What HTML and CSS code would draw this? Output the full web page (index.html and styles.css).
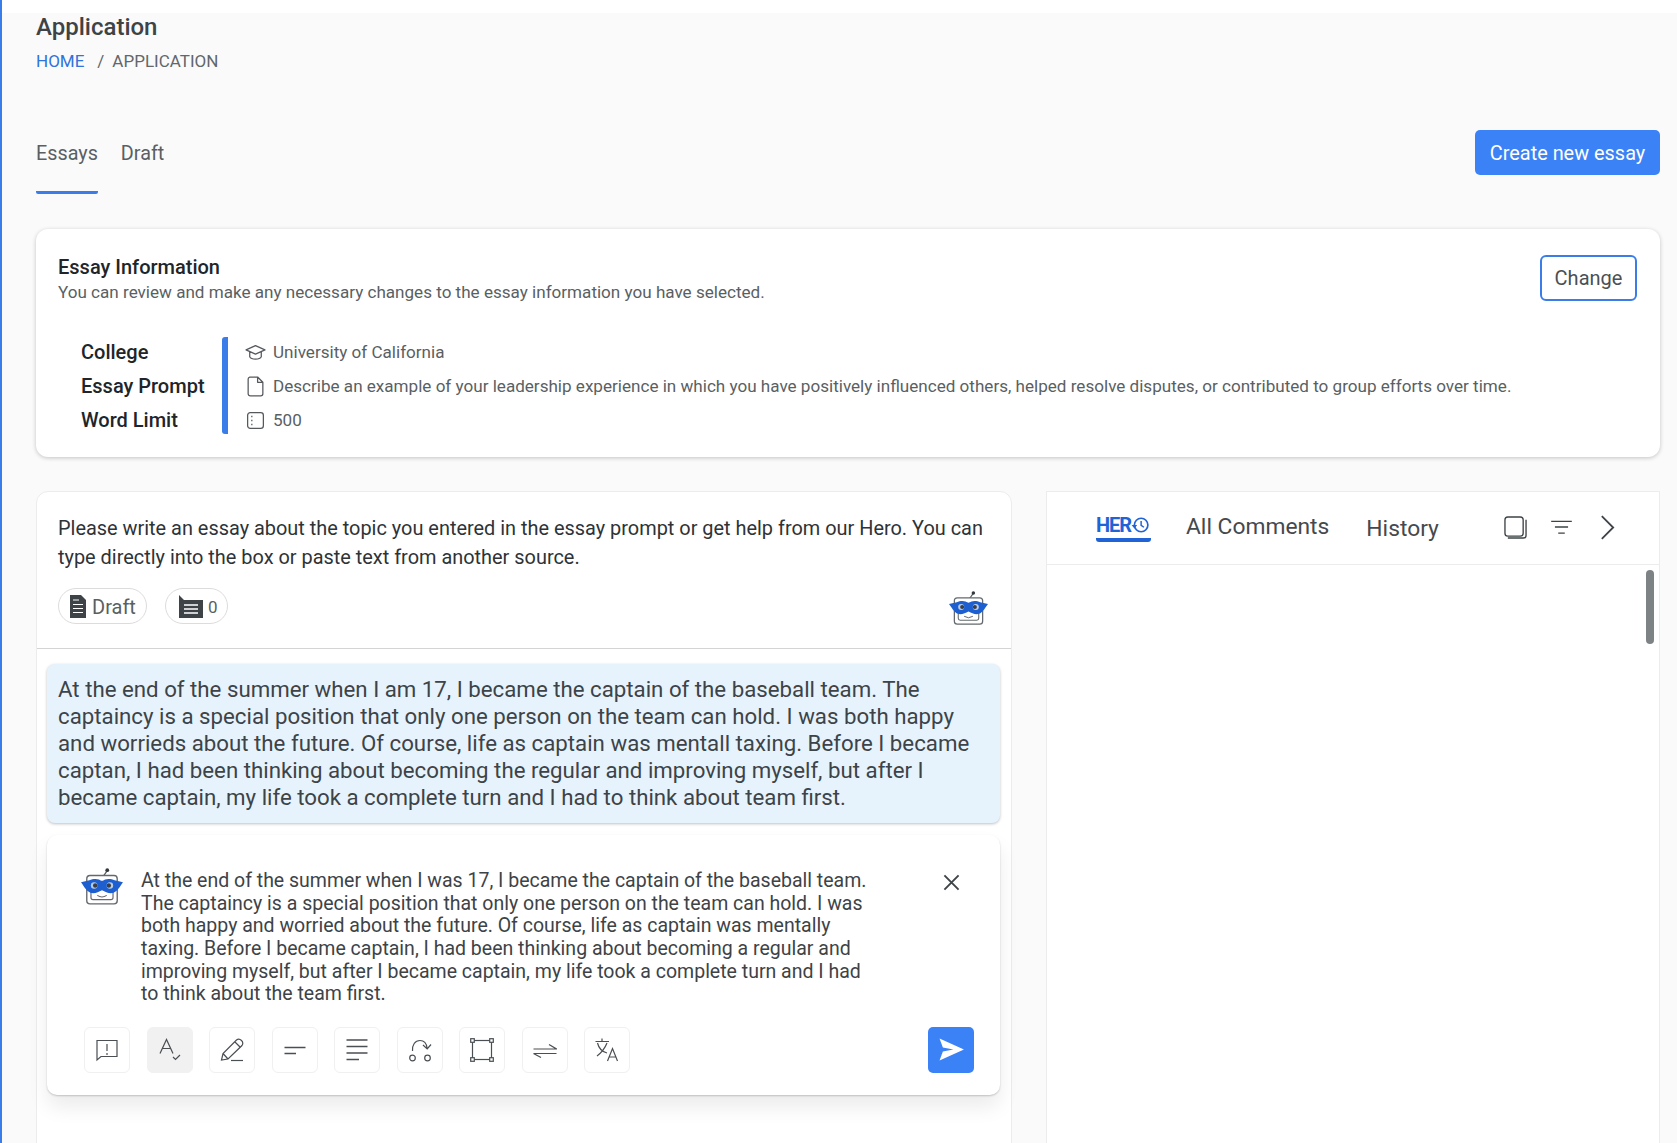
FILE: index.html
```html
<!DOCTYPE html>
<html lang="en">
<head>
<meta charset="utf-8">
<title>Application</title>
<link rel="stylesheet" href="styles.css">
</head>
<body>
<svg class="defs" width="0" height="0" aria-hidden="true">
  <symbol id="robot" viewBox="0 0 40 35">
    <path d="M21 8 L24.500 3" fill="none" stroke="#555b60" stroke-width="1.200"/>
    <circle cx="25" cy="2" r="1.800" fill="#33383c"/>
    <rect x="5.500" y="7" width="29" height="27" rx="3" fill="#fff" stroke="#63696e" stroke-width="1.300"/>
    <path d="M9.500 20 V28 a2 2 0 0 0 2 2 H28.500 a2 2 0 0 0 2 -2 V20" fill="none" stroke="#63696e" stroke-width="1.100"/>
    <path d="M15.500 26 q4.500 3 9 0" fill="none" stroke="#63696e" stroke-width="1"/>
    <path d="M0 13.500 L8 11.500 C11 10 15 10 17 10.800 C18.500 11.500 19 12 20 12 C21 12 21.500 11.500 23 10.800 C25 10 29 10 32 11.500 L40 13.500 C37.500 16.500 35.500 21.500 31 23.500 C27 25 23.500 22.500 20 21 C16.500 22.500 13 25 9 23.500 C4.500 21.500 2.500 16.500 0 13.500 Z" fill="#1d5fd1"/>
    <circle cx="12.500" cy="16.500" r="3.100" fill="#b9cce8"/>
    <circle cx="27.500" cy="16.500" r="3.100" fill="#b9cce8"/>
    <circle cx="13.500" cy="16.500" r="2.100" fill="#3a3f44"/>
    <circle cx="26.500" cy="16.500" r="2.100" fill="#3a3f44"/>
  </symbol>
</svg>

<main class="page">
  <header class="page-head">
    <h1 class="page-title">Application</h1>
    <nav class="crumbs"><a class="crumb-link">HOME</a><span class="crumb-sep">/</span><span>APPLICATION</span></nav>
  </header>

  <div class="tabbar">
    <div class="tabs">
      <span class="tab tab-active">Essays</span>
      <span class="tab">Draft</span>
    </div>
    <button class="btn-primary">Create new essay</button>
  </div>

  <section class="info-card">
    <div class="info-head">
      <div>
        <h2 class="info-title">Essay Information</h2>
        <p class="info-sub">You can review and make any necessary changes to the essay information you have selected.</p>
      </div>
      <button class="btn-outline">Change</button>
    </div>
    <div class="info-body">
      <div class="info-labels">
        <div class="info-label">College</div>
        <div class="info-label">Essay Prompt</div>
        <div class="info-label">Word Limit</div>
      </div>
      <div class="info-values">
        <div class="info-value">
          <svg class="info-icon" viewBox="0 0 20 20"><path d="M10 3.500 L19 7.500 L10 11.500 L1 7.500 Z M4.500 9.500 V14 C6 17 14 17 15.500 14 V9.500" fill="none" stroke="#55595d" stroke-width="1.200" stroke-linejoin="round"/></svg>
          University of California
        </div>
        <div class="info-value">
          <svg class="info-icon" viewBox="0 0 20 20"><path d="M4.500 1 H12 L17 6 V17 a2 2 0 0 1 -2 2 H5 a2 2 0 0 1 -2 -2 V3 a2 2 0 0 1 1.500 -2 Z M12 1 V6 H17" fill="none" stroke="#55595d" stroke-width="1.200" stroke-linejoin="round"/></svg>
          Describe an example of your leadership experience in which you have positively influenced others, helped resolve disputes, or contributed to group efforts over time.
        </div>
        <div class="info-value">
          <svg class="info-icon" viewBox="0 0 20 20"><rect x="2.500" y="2.500" width="15" height="15" rx="2.500" fill="none" stroke="#55595d" stroke-width="1.200"/><path d="M6.500 5.500 V7 M6.500 9.200 V10.800 M6.500 13 V14.500" stroke="#55595d" stroke-width="1.200"/></svg>
          500
        </div>
      </div>
    </div>
  </section>

  <div class="workspace">
    <section class="editor">
      <div class="editor-head">
        <p class="editor-intro">Please write an essay about the topic you entered in the essay prompt or get help from our Hero. You can type directly into the box or paste text from another source.</p>
        <div class="editor-meta">
          <div class="pills">
            <span class="pill">
              <svg class="pill-icon" viewBox="0 0 16 23"><path d="M0 0 H11 L16 5 V23 H0 Z" fill="#3d4347"/><path d="M3 5 H9 M3 9.500 H13 M3 13.500 H13 M3 17.500 H13" stroke="#fff" stroke-width="1.200"/></svg>
              Draft
            </span>
            <span class="pill pill-count">
              <svg class="pill-icon-wide" viewBox="0 0 24 23"><path d="M0 0 L5 5 H24 V23 H0 Z" fill="#3d4347"/><path d="M5 10 H19 M5 14 H19 M5 18 H19" stroke="#fff" stroke-width="1.700"/></svg>
              0
            </span>
          </div>
          <svg class="robot-small"><use href="#robot"/></svg>
        </div>
      </div>
      <div class="editor-body">
        <div class="highlight">At the end of the summer when I am 17, I became the captain of the baseball team. The captaincy is a special position that only one person on the team can hold. I was both happy and worrieds about the future. Of course, life as captain was mentall taxing. Before I became captan, I had been thinking about becoming the regular and improving myself, but after I became captain, my life took a complete turn and I had to think about team first.</div>
        <div class="suggest">
          <div class="suggest-top">
            <svg class="robot-large"><use href="#robot"/></svg>
            <p class="suggest-text">At the end of the summer when I was 17, I became the captain of the baseball team. The captaincy is a special position that only one person on the team can hold. I was both happy and worried about the future. Of course, life as captain was mentally taxing. Before I became captain, I had been thinking about becoming a regular and improving myself, but after I became captain, my life took a complete turn and I had to think about the team first.</p>
            <svg class="close" viewBox="0 0 18 18"><path d="M1.500 1.500 L16.500 16.500 M16.500 1.500 L1.500 16.500" stroke="#3d4347" stroke-width="2"/></svg>
          </div>
          <div class="toolbar">
            <div class="tools">
              <span class="tool"><svg viewBox="0 0 24 24"><path d="M2 2.500 H22 V18.500 H6 L2 22 Z" class="ic"/><path d="M12 6 V13 M12 15 V17" class="ic"/></svg></span>
              <span class="tool tool-on"><svg viewBox="0 0 24 24"><path d="M2 15.500 L8.500 1.500 L15 15.500 M4.500 10.500 H12.500" class="ic"/><path d="M15 19 L17.500 21.500 L22 17" class="ic"/></svg></span>
              <span class="tool"><svg viewBox="0 0 24 24"><path d="M1.500 22 L3 15.500 L16.500 2 C18 0.800 20 1 21.500 2.500 C23 4 23 6 22 7.500 L8 21 Z M3 15.500 L8 21 M15 4 L20 9" class="ic"/><path d="M11 22.500 H23" class="ic"/></svg></span>
              <span class="tool"><svg viewBox="0 0 24 24"><path d="M1.500 9.500 H22.500 M1.500 15.500 H13" class="ic ic-thick"/></svg></span>
              <span class="tool"><svg viewBox="0 0 24 24"><path d="M1.500 2 H22.500 M1.500 8.500 H22.500 M1.500 15 H22.500 M1.500 21.500 H14" class="ic ic-thick"/></svg></span>
              <span class="tool"><svg viewBox="0 0 24 24"><path d="M4.500 13 C4 7 7 2.500 12 2.500 C16 2.500 18.500 5.500 19 10 M15 7 L19.200 11 L23 6.500" class="ic"/><circle cx="4.500" cy="20" r="2.800" class="ic"/><circle cx="19.500" cy="20" r="2.800" class="ic"/></svg></span>
              <span class="tool"><svg viewBox="0 0 24 24"><rect x="2.500" y="2.500" width="19" height="19" class="ic"/><g class="ic-box"><rect x="0.700" y="0.700" width="3.600" height="3.600"/><rect x="19.700" y="0.700" width="3.600" height="3.600"/><rect x="0.700" y="19.700" width="3.600" height="3.600"/><rect x="19.700" y="19.700" width="3.600" height="3.600"/></g></svg></span>
              <span class="tool"><svg viewBox="0 0 24 24"><path d="M0.500 11 H23.500 L16 6.500 M0.500 15.500 H23.500 M0.500 15.500 L8 19.500" class="ic"/></svg></span>
              <span class="tool"><svg viewBox="0 0 24 24"><path d="M0.500 3.500 H14 M7 0.500 V3.500 M2.500 5 C4 11 8 14 12 15 M12 5 C10 10 6 15 2 18" class="ic"/><path d="M12.500 23 L17.500 10.500 L22.500 23 M14.200 19 H20.800" class="ic"/></svg></span>
            </div>
            <button class="send"><svg viewBox="0 0 28 24"><path d="M1.500 0.500 L27 12 L1.500 23.500 L5 14 L16 12 L5 10 Z" fill="#fff"/></svg></button>
          </div>
        </div>
      </div>
    </section>

    <aside class="side">
      <div class="side-head">
        <span class="side-hero">HER<svg class="hero-clock" viewBox="0 0 16 16"><circle cx="9" cy="8" r="6" fill="none" stroke="#1f63d6" stroke-width="1.500"/><path d="M9 4.500 V8.300 L11.500 10" fill="none" stroke="#1f63d6" stroke-width="1.300"/><path d="M0.500 8 H5.500 L3 11 Z" fill="#1f63d6"/></svg></span>
        <span class="side-tab side-tab-a">All Comments</span>
        <span class="side-tab side-tab-b">History</span>
        <div class="side-icons">
          <svg class="side-ic-copy" viewBox="0 0 24 24"><rect x="1" y="1" width="19" height="20" rx="3" fill="none" stroke="#3d4347" stroke-width="1.400"/><path d="M23 4 V20 a3 3 0 0 1 -3 3 H4" fill="none" stroke="#3d4347" stroke-width="1.400"/></svg>
          <svg class="side-ic-filter" viewBox="0 0 22 16"><path d="M0 1.500 H22 M4 7.500 H18 M7.500 14 H14.500" stroke="#3d4347" stroke-width="1.500"/></svg>
          <svg class="side-ic-chev" viewBox="0 0 12 22"><path d="M1 1 L11 11 L1 21" fill="none" stroke="#3d4347" stroke-width="1.600"/></svg>
        </div>
      </div>
      <div class="side-body"><span class="scroll-thumb"></span></div>
    </aside>
  </div>
</main>
</body>
</html>
```

FILE: styles.css
```css
* { box-sizing: border-box; }
html, body { margin: 0; height: 100%; }
body {
  height: 1143px;
  overflow: hidden;
  background: #fff;
  border-left: 2px solid #3b7de8;
  font-family: Roboto, "Liberation Sans", sans-serif;
  color: #3d4347;
}
.defs { position: absolute; }
.page {
  margin-top: 13px;
  height: 1130px;
  padding: 0 17px 0 34px;
  background: #fafafa;
  overflow: hidden;
}
.page-head { height: 90px; }
.page-title {
  margin: 0;
  font-size: 24px;
  line-height: 28px;
  font-weight: 500;
  color: #3d4347;
}
.crumbs {
  margin-top: 6px;
  display: flex;
  font-size: 17px;
  line-height: 28px;
  color: #62676b;
}
.crumb-link { color: #2f73dd; }
.crumb-sep { margin: 0 8px 0 13px; }

.tabbar {
  height: 126px;
  display: flex;
  justify-content: space-between;
  align-items: flex-start;
  padding-top: 27px;
}
.tabs { display: flex; gap: 23px; }
.tab {
  height: 64px;
  line-height: 47px;
  font-size: 19.800px;
  color: #5a5f63;
}
.tab-active {
  border-bottom: 3px solid #3b7de8;
  border-radius: 0 0 2px 2px;
}
.btn-primary {
  width: 185px;
  height: 45px;
  padding: 1px 0 0;
  border: 0;
  border-radius: 5px;
  background: #3b82f6;
  color: #fff;
  font: 400 19.900px Roboto, sans-serif;
}

.info-card {
  height: 228px;
  padding: 25px 23px 0 22px;
  background: #fff;
  border-radius: 12px;
  box-shadow: 0 1px 4px rgba(0,0,0,.22);
}
.info-head { display: flex; justify-content: space-between; }
.info-title {
  margin: 0;
  font-size: 20px;
  line-height: 26px;
  font-weight: 500;
  color: #212529;
}
.info-sub {
  margin: 0;
  font-size: 17.080px;
  line-height: 25px;
  color: #5a5f63;
}
.btn-outline {
  width: 97px;
  height: 46px;
  margin-top: 1px;
  background: #fff;
  border: 2px solid #3b7de8;
  border-radius: 6px;
  color: #4b5054;
  font: 400 20px Roboto, sans-serif;
}
.info-body { display: flex; margin-top: 33px; padding-left: 23px; }
.info-labels { width: 141px; margin-top: -3px; }
.info-label {
  height: 34px;
  line-height: 34px;
  font-size: 20px;
  font-weight: 500;
  color: #212529;
}
.info-values {
  border-left: 6px solid #3b7de8;
  border-radius: 3px;
  padding-left: 17px;
  height: 97px;
  margin-top: -1px;
}
.info-value {
  height: 34px;
  display: flex;
  align-items: center;
  gap: 7px;
  font-size: 17.080px;
  color: #5a5f63;
  position: relative;
  top: -2px;
}
.info-icon { width: 21px; height: 21px; flex: none; }

.workspace {
  display: flex;
  gap: 34px;
  margin-top: 34px;
  height: 700px;
}
.editor {
  width: 976px;
  background: #fff;
  border: 1px solid #ececec;
  border-radius: 12px 12px 0 0;
}
.editor-head {
  height: 157px;
  padding: 23px 22px 0 21px;
  border-bottom: 1.500px solid #d4d4d4;
}
.editor-intro {
  margin: 0;
  font-size: 19.920px;
  line-height: 28.500px;
  color: #2e3337;
}
.editor-meta {
  display: flex;
  justify-content: space-between;
  align-items: flex-start;
  margin-top: 16px;
}
.pills { display: flex; gap: 18px; }
.pill {
  width: 89px;
  height: 36px;
  display: inline-flex;
  align-items: center;
  gap: 6px;
  padding: 1px 0 0 11px;
  border: 1px solid #dcdcdc;
  border-radius: 18px;
  font-size: 20px;
  color: #5a5f63;
}
.pill-count { width: 63px; font-size: 17px; gap: 5px; padding-left: 13px; }
.pill-icon { width: 16px; height: 23px; }
.pill-icon-wide { width: 24px; height: 23px; }
.robot-small { width: 39px; height: 36px; margin: 2px 1px 0 0; }

.editor-body { padding: 15px 11px 0 10px; }
.highlight {
  height: 159px;
  padding: 12px 20px 0 11px;
  background: #e6f3fd;
  border-radius: 8px;
  box-shadow: 0 1px 3px rgba(0,0,0,.25);
  font-size: 22.250px;
  line-height: 27px;
  color: #3d4347;
}
.suggest {
  margin-top: 12px;
  height: 260px;
  padding: 34px 26px 0 34px;
  background: #fff;
  border-radius: 10px;
  box-shadow: 0 1px 2px rgba(0,0,0,.2), 0 12px 20px rgba(0,0,0,.08);
}
.suggest-top { display: flex; align-items: flex-start; }
.robot-large { width: 42px; height: 37px; flex: none; margin-top: -1px; }
.suggest-text {
  width: 733px;
  margin: 1px 0 0 18px;
  font-size: 19.500px;
  line-height: 22.650px;
  color: #3d4347;
}
.close { width: 17px; height: 17px; margin: 5px 14px 0 auto; flex: none; }
.toolbar {
  display: flex;
  justify-content: space-between;
  margin-top: 21px;
}
.tools { display: flex; gap: 16.500px; margin-left: 3px; }
.tool {
  width: 46px;
  height: 46px;
  display: flex;
  align-items: center;
  justify-content: center;
  background: #fff;
  border: 1px solid #f0f0f0;
  border-radius: 6px;
}
.tool-on { background: #f1f1f1; border-color: #f1f1f1; }
.tool svg { width: 24px; height: 24px; }
.ic { fill: none; stroke: #4a4f53; stroke-width: 1.200; }
.ic-thick { stroke-width: 1.700; }
.ic-box rect { fill: #fff; stroke: #4a4f53; stroke-width: 1.200; }
.send {
  width: 46px;
  height: 46px;
  padding: 0;
  border: 0;
  border-radius: 5px;
  background: #3b82f6;
  display: flex;
  align-items: center;
  justify-content: center;
}
.send svg { width: 27px; height: 23px; }

.side {
  width: 614px;
  background: #fff;
  border: 1px solid #ececec;
}
.side-head {
  height: 73px;
  display: flex;
  align-items: center;
  padding-left: 49px;
  border-bottom: 1px solid #ececec;
}
.side-hero {
  display: inline-flex;
  align-items: center;
  width: 55px;
  height: 30px;
  margin-top: -3px;
  border-bottom: 4px solid #1f63d6;
  border-radius: 0 0 3px 3px;
  font-size: 20px;
  font-weight: 700;
  letter-spacing: -1px;
  color: #1f63d6;
}
.hero-clock { width: 18px; height: 18px; }
.side-tab { font-size: 22.800px; color: #45494d; }
.side-tab-a { margin-left: 35px; margin-top: -3px; }
.side-tab-b { margin-left: 37px; margin-top: 1px; }
.side-icons { display: flex; align-items: center; margin-left: 65px; margin-top: -2px; }
.side-ic-copy { width: 23px; height: 23px; }
.side-ic-filter { width: 21px; height: 15px; margin-left: 24px; }
.side-ic-chev { width: 15px; height: 25px; margin-left: 28px; }
.side-body { position: relative; height: 620px; }
.scroll-thumb {
  position: absolute;
  top: 5px;
  right: 5px;
  width: 8px;
  height: 74px;
  border-radius: 4px;
  background: #7d8285;
}
```
